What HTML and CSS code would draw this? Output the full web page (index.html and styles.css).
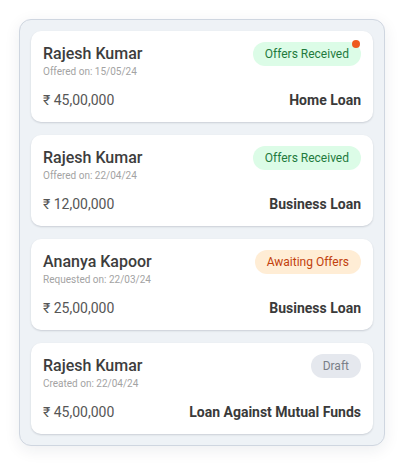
FILE: index.html
```html
<!DOCTYPE html>
<html lang="en">
<head>
<meta charset="utf-8">
<title>Loan Requests</title>
<link rel="stylesheet" href="styles.css">
</head>
<body>
<div class="panel">
  <div class="card">
    <div class="top">
      <div class="name">Rajesh Kumar</div>
      <span class="badge badge-green">Offers Received<span class="dot"></span></span>
    </div>
    <div class="date">Offered on: 15/05/24</div>
    <div class="bottom">
      <div class="amount">₹ 45,00,000</div>
      <div class="type">Home Loan</div>
    </div>
  </div>
  <div class="card">
    <div class="top">
      <div class="name">Rajesh Kumar</div>
      <span class="badge badge-green">Offers Received</span>
    </div>
    <div class="date">Offered on: 22/04/24</div>
    <div class="bottom">
      <div class="amount">₹ 12,00,000</div>
      <div class="type">Business Loan</div>
    </div>
  </div>
  <div class="card">
    <div class="top">
      <div class="name">Ananya Kapoor</div>
      <span class="badge badge-orange">Awaiting Offers</span>
    </div>
    <div class="date">Requested on: 22/03/24</div>
    <div class="bottom">
      <div class="amount">₹ 25,00,000</div>
      <div class="type">Business Loan</div>
    </div>
  </div>
  <div class="card">
    <div class="top">
      <div class="name">Rajesh Kumar</div>
      <span class="badge badge-gray">Draft</span>
    </div>
    <div class="date">Created on: 22/04/24</div>
    <div class="bottom">
      <div class="amount">₹ 45,00,000</div>
      <div class="type">Loan Against Mutual Funds</div>
    </div>
  </div>
</div>
</body>
</html>
```
FILE: styles.css
```css
* { box-sizing: border-box; }
html, body { margin: 0; padding: 0; background: #ffffff; }
body {
  font-family: Roboto, "Liberation Sans", Arial, sans-serif;
  padding: 19px 20px 19px 19px;
}
.panel {
  width: 366px;
  background: #eef2f6;
  border: 1px solid #cfd6e0;
  border-radius: 12px;
  padding: 11px;
  display: flex;
  flex-direction: column;
  gap: 13px;
  box-shadow: 0 4px 16px rgba(30, 41, 59, 0.08);
}
.card {
  background: #ffffff;
  border-radius: 10px;
  padding: 11px 12px 12px;
  box-shadow: 0 1px 2px rgba(15, 23, 42, 0.16);
}
.top {
  display: flex;
  justify-content: space-between;
  align-items: center;
  height: 24px;
}
.name {
  font-size: 16px;
  font-weight: 500;
  line-height: 20px;
  color: #3d3d3d;
}
.date {
  font-size: 10px;
  line-height: 12px;
  color: #a3a3a3;
}
.bottom {
  margin-top: 12px;
  display: flex;
  justify-content: space-between;
  align-items: center;
  height: 20px;
}
.amount {
  font-size: 14px;
  color: #565656;
}
.type {
  font-size: 14px;
  font-weight: 700;
  color: #3a3a3a;
}
.badge {
  position: relative;
  display: inline-flex;
  align-items: center;
  height: 24px;
  padding: 0 12px;
  border-radius: 12px;
  font-size: 12px;
}
.badge-green { background: #dcfce7; color: #1f7a3d; }
.badge-orange { background: #ffedd5; color: #c2410c; }
.badge-gray { background: #e5e8ee; color: #7a7f88; }
.dot {
  position: absolute;
  top: -2px;
  right: 1px;
  width: 8px;
  height: 8px;
  border-radius: 50%;
  background: #ee5a1f;
}
```
